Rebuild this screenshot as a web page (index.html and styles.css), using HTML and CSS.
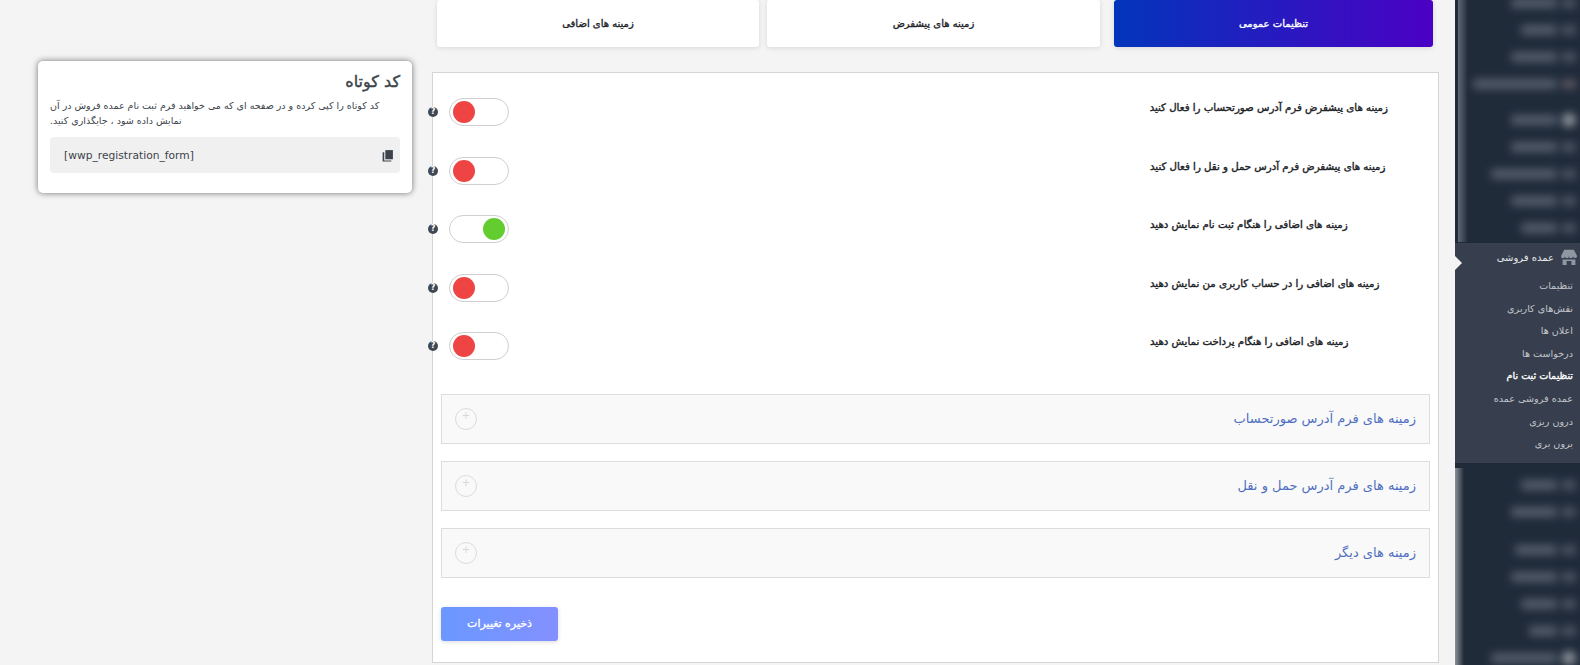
FILE: index.html
```html
<!DOCTYPE html>
<html lang="fa" dir="rtl">
<head>
<meta charset="utf-8">
<title>تنظیمات ثبت نام</title>
<link rel="stylesheet" href="styles.css">
</head>
<body>
<div class="page">
  <aside class="sidebar">
    <div class="blur-group top">
      <div class="r"><i></i><span class="b w50"></span></div>
      <div class="r"><i></i><span class="b w40"></span></div>
      <div class="r"><i></i><span class="b w50"></span></div>
      <div class="r"><i class="pink"></i><span class="b w90"></span></div>
      <div class="r big"><i class="dot"></i><span class="b w50"></span></div>
      <div class="r"><i></i><span class="b w50"></span></div>
      <div class="r"><i></i><span class="b w70"></span></div>
      <div class="r"><i></i><span class="b w50"></span></div>
      <div class="r"><i></i><span class="b w40"></span></div>
    </div>
    <div class="menu">
      <div class="menu-head">
        <svg class="store" viewBox="0 0 20 20"><path d="M4 1h12l4 7.500a2.500 2.500 0 0 1-5 .5 2.500 2.500 0 0 1-5 0 2.500 2.500 0 0 1-5 0 2.500 2.500 0 0 1-5 0z" fill="#8f97a3"/><path d="M2 13h16v7h-5v-5H7v5H2z" fill="#8f97a3"/></svg>
        <span>عمده فروشی</span>
      </div>
      <ul class="sub">
        <li>تنظیمات</li>
        <li>نقش‌های کاربری</li>
        <li>اعلان ها</li>
        <li>درخواست ها</li>
        <li class="current">تنظیمات ثبت نام</li>
        <li>عمده فروشی عمده</li>
        <li>درون ریزی</li>
        <li>برون بری</li>
      </ul>
    </div>
    <div class="blur-group bottom">
      <div class="r"><i></i><span class="b w40"></span></div>
      <div class="r"><i></i><span class="b w50"></span></div>
      <div class="r big2"><i></i><span class="b w45"></span></div>
      <div class="r"><i></i><span class="b w50"></span></div>
      <div class="r"><i></i><span class="b w40"></span></div>
      <div class="r"><i></i><span class="b w35"></span></div>
      <div class="r"><i class="dot"></i><span class="b w70"></span></div>
    </div>
  </aside>

  <main class="main">
    <nav class="tabs">
      <a class="tab active">تنظیمات عمومی</a>
      <a class="tab mid">زمینه های پیشفرض</a>
      <a class="tab last">زمینه های اضافی</a>
    </nav>
    <section class="panel">
      <div class="row">
        <label class="label">زمینه های پیشفرض فرم آدرس صورتحساب را فعال کنید</label>
        <div class="ctrl"><span class="toggle off"></span><span class="help">?</span></div>
      </div>
      <div class="row">
        <label class="label">زمینه های پیشفرض فرم آدرس حمل و نقل را فعال کنید</label>
        <div class="ctrl"><span class="toggle off"></span><span class="help">?</span></div>
      </div>
      <div class="row">
        <label class="label">زمینه های اضافی را هنگام ثبت نام نمایش دهید</label>
        <div class="ctrl"><span class="toggle on"></span><span class="help">?</span></div>
      </div>
      <div class="row">
        <label class="label">زمینه های اضافی را در حساب کاربری من نمایش دهید</label>
        <div class="ctrl"><span class="toggle off"></span><span class="help">?</span></div>
      </div>
      <div class="row">
        <label class="label">زمینه های اضافی را هنگام پرداخت نمایش دهید</label>
        <div class="ctrl"><span class="toggle off"></span><span class="help">?</span></div>
      </div>
      <div class="accordions">
        <div class="acc"><span>زمینه های فرم آدرس صورتحساب</span><span class="plus">+</span></div>
        <div class="acc"><span>زمینه های فرم آدرس حمل و نقل</span><span class="plus">+</span></div>
        <div class="acc"><span>زمینه های دیگر</span><span class="plus">+</span></div>
      </div>
      <div class="actions"><button class="save">ذخیره تغییرات</button></div>
    </section>
  </main>

  <aside class="side-col">
    <div class="card">
      <h3>کد کوتاه</h3>
      <p>کد کوتاه را کپی کرده و در صفحه ای که می خواهید فرم ثبت نام عمده فروش در آن نمایش داده شود ، جایگذاری کنید.</p>
      <div class="code">
        <svg class="copy" viewBox="0 0 24 24"><path d="M8 2h14v17H8z" fill="#3c434a"/><path d="M3 6h3v15h13v2H3z" fill="#3c434a"/></svg>
        <span dir="ltr">[wwp_registration_form]</span>
      </div>
    </div>
  </aside>
</div>
</body>
</html>
```

FILE: styles.css
```css
* { box-sizing: border-box; }
html, body { margin: 0; height: 100%; }
body {
  background: #f4f4f4;
  font-family: "DejaVu Sans", sans-serif;
  color: #1d2327;
  overflow: hidden;
}
.page {
  display: flex;
  height: 665px;
  align-items: flex-start;
}
.sidebar {
  width: 125px;
  height: 665px;
  flex: none;
  background: #202b3a;
  display: flex;
  flex-direction: column;
  overflow: hidden;
}
.blur-group {
  display: flex;
  flex-direction: column;
  gap: 17px;
  overflow: hidden;
  background-repeat: no-repeat;
  flex: none;
}
.blur-group.top {
  height: 245px;
  margin-top: -2px;
  background-image: linear-gradient(90deg, #202b3a 3px, #5f6875 3px, #202b3a 13px);
  background-size: 100% 244px;
}
.blur-group.bottom {
  height: 202px;
  padding-top: 17px;
  background-image: linear-gradient(90deg, #8c9198, #202b3a 9px);
  background-position: 0 5px;
}
.r {
  display: flex;
  align-items: center;
  gap: 5px;
  height: 10px;
  flex: none;
  padding-right: 4px;
  filter: blur(4px);
}
.r.big { margin-top: 9px; }
.r.big2 { margin-top: 11px; }
.r i { display: block; width: 14px; height: 10px; background: #4b5462; border-radius: 3px; flex: none; }
.r i.dot { height: 14px; background: #8d939b; border-radius: 50%; }
.r i.pink { background: #5b5560; }
.b { display: block; height: 10px; background: #535c6a; border-radius: 3px; flex: none; }
.w35 { width: 28px; }
.w40 { width: 36px; }
.w45 { width: 42px; }
.w50 { width: 46px; }
.w70 { width: 66px; }
.w90 { width: 84px; }
.menu {
  height: 220px;
  flex: none;
  background: #373f4e;
  position: relative;
  color: #e6e8ea;
}
.menu::before {
  content: "";
  position: absolute;
  left: 0;
  top: 13px;
  border: 7px solid transparent;
  border-left-color: #f4f4f4;
  border-right-width: 0;
}
.menu-head {
  height: 25px;
  margin-top: 1px;
  padding: 1px 3px 0 0;
  display: flex;
  align-items: center;
  gap: 7px;
  font-size: 10px;
}
.store { width: 16px; height: 16px; }
.sub { list-style: none; margin: 6px 0 0; padding: 0 7px 0 0; }
.sub li { height: 22.600px; line-height: 22px; font-size: 9.600px; color: #c3c6cb; }
.sub li.current { color: #fff; -webkit-text-stroke: .35px currentColor; }
.main {
  flex: none;
  width: 1007px;
  margin-right: 16px;
}
.tabs { display: flex; padding: 0 6px 0 0; height: 72px; align-items: flex-start; }
.tab {
  height: 47px;
  display: flex;
  align-items: center;
  justify-content: center;
  background: #fff;
  border-radius: 3px;
  font-size: 10px;
  -webkit-text-stroke: .35px currentColor;
  color: #1d2327;
  box-shadow: 0 1px 5px rgba(0,0,0,.12);
}
.tab.active {
  width: 319px;
  margin-left: 14px;
  color: #fff;
  background: linear-gradient(90deg, #0235bb, #4b00c4);
}
.tab.mid { width: 333px; margin-left: 8px; }
.tab.last { width: 322px; }
.panel {
  height: 591px;
  background: #fff;
  border: 1px solid #d5d5d5;
  padding: 0 8px;
  display: flex;
  flex-direction: column;
}
.row {
  height: 58.500px;
  display: flex;
  padding: 27px 42px 0 0;
  position: relative;
}
.label {
  width: 238px;
  white-space: nowrap;
  text-align: left;
  font-size: 10.200px;
  -webkit-text-stroke: .4px currentColor;
  color: #1d2327;
  line-height: 16px;
}
.ctrl { display: flex; align-items: center; gap: 11px; height: 28px; position: absolute; left: -13px; top: 25px; }
.toggle {
  width: 60px;
  height: 28px;
  border: 1px solid #cfcfcf;
  border-radius: 14px;
  background: #fff;
  display: block;
  position: relative;
}
.toggle::after {
  content: "";
  position: absolute;
  top: 2px;
  width: 22px;
  height: 22px;
  border-radius: 50%;
}
.toggle.off::after { left: 3px; background: #ef4444; }
.toggle.on::after { right: 3px; background: #63cc2f; }
.help {
  width: 10px;
  height: 10px;
  border-radius: 50%;
  background: #3f4854;
  color: #fff;
  font-size: 8px;
  font-weight: 700;
  line-height: 10px;
  text-align: center;
}
.accordions { display: flex; flex-direction: column; gap: 17px; margin-top: 28px; }
.acc {
  height: 50px;
  background: #f9f9f9;
  border: 1px solid #ddd;
  display: flex;
  align-items: center;
  justify-content: space-between;
  padding: 0 13px 0 13px;
  font-size: 13px;
  color: #4f6fc0;
}
.plus {
  width: 22px;
  height: 22px;
  border: 1px solid #dcdcdc;
  border-radius: 50%;
  color: #d8d8d8;
  font-size: 10px;
  line-height: 14px;
  text-align: center;
}
.actions { margin-top: 29px; display: flex; justify-content: flex-end; }
.save {
  width: 117px;
  height: 34px;
  border: 0;
  border-radius: 3px;
  background: linear-gradient(90deg, #6a98ff, #8390ff);
  box-shadow: 0 1px 4px rgba(0,0,0,.15);
  color: #fff;
  font-family: inherit;
  font-size: 11px;
  -webkit-text-stroke: .3px currentColor;
}
.side-col { flex: none; width: 374px; margin-right: 20px; padding-top: 61px; }
.card {
  height: 132px;
  background: #fff;
  border-radius: 5px;
  box-shadow: 0 0 6px rgba(0,0,0,.55);
  padding: 10px 12px;
}
.card h3 { margin: 0; font-size: 16px; font-weight: 400; -webkit-text-stroke: .4px currentColor; line-height: 22px; color: #3c434a; }
.card p { margin: 5px 0 0; font-size: 9.500px; line-height: 15px; color: #3c434a; text-align: left; }
.code {
  margin-top: 9px;
  height: 36px;
  background: #f0f0f1;
  border-radius: 4px;
  display: flex;
  align-items: center;
  justify-content: space-between;
  padding: 0 6px 0 14px;
  font-size: 10.700px;
  color: #3c434a;
}
.copy { width: 13px; height: 13px; }
```
